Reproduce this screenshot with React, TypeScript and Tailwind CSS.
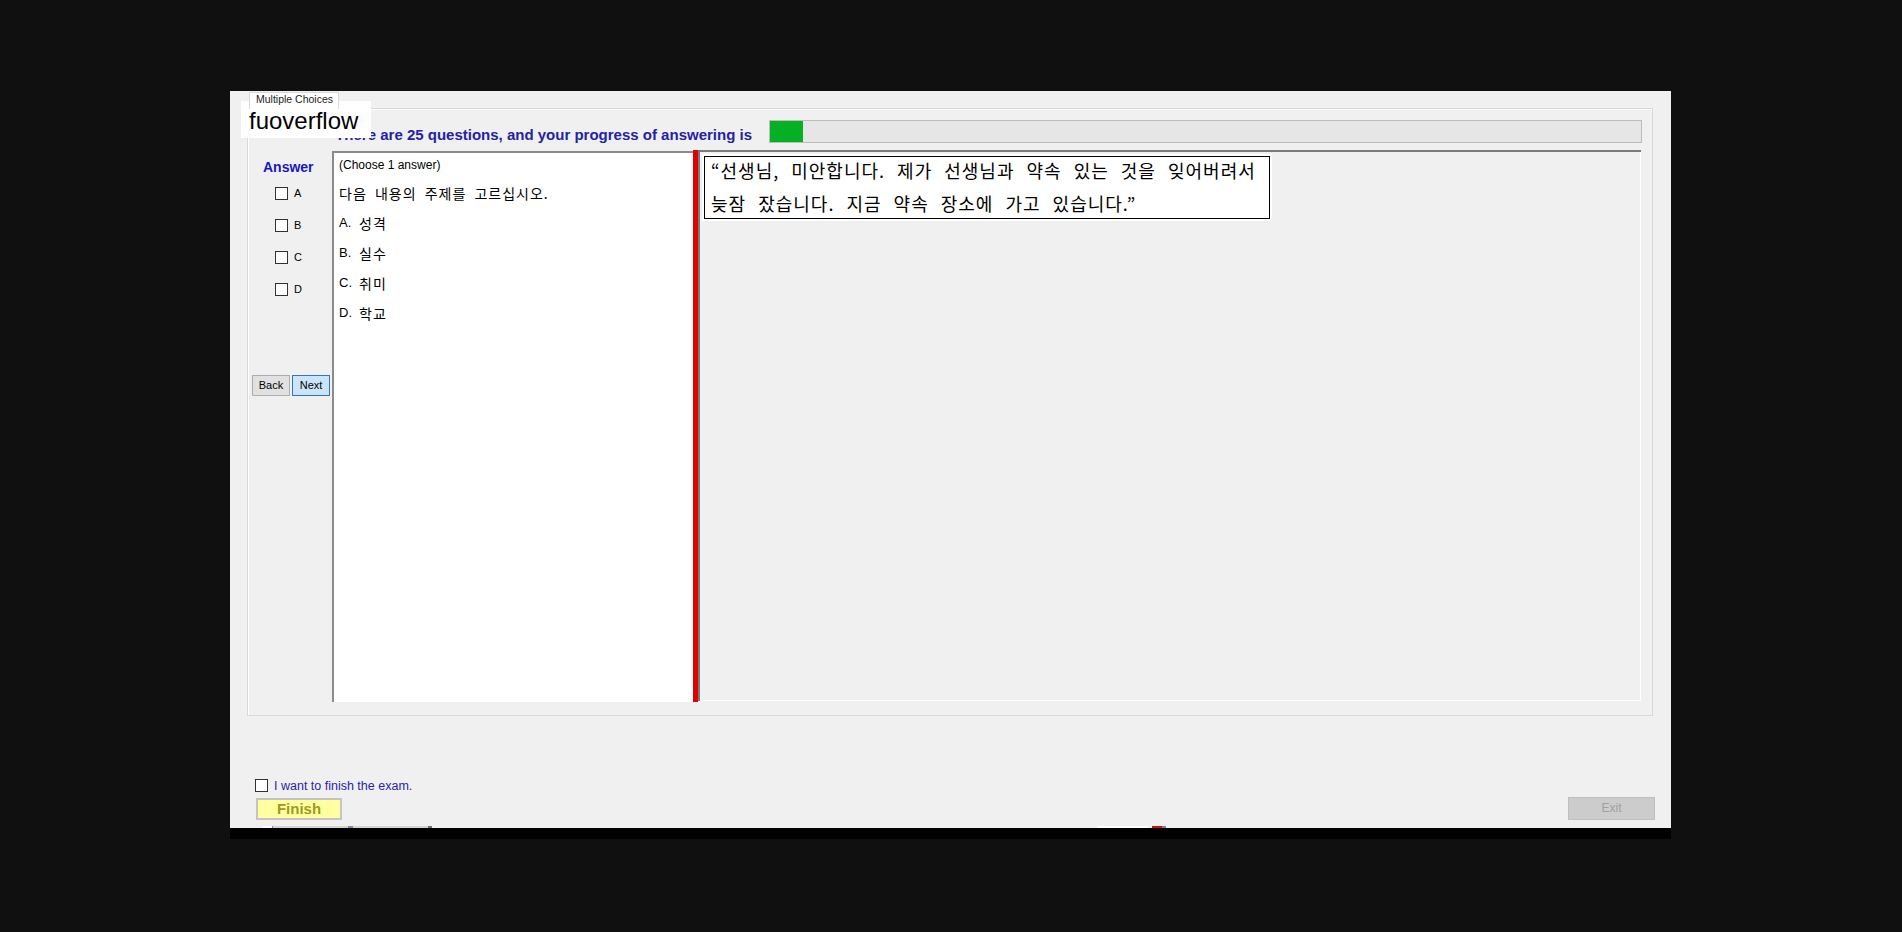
import React from "react";

const sans = { fontFamily: '"Liberation Sans", Arial, sans-serif' };
const kr = { fontFamily: '"Noto Sans CJK KR", "Liberation Sans", sans-serif' };

function Box() {
  return <span className="inline-block w-[13px] h-[13px] border border-[#333333] bg-white" />;
}

export default function App() {
  return (
    <div className="w-[1902px] h-[932px] bg-[#101010] pt-[91px] pl-[230px] overflow-hidden" style={sans}>
      <div className="w-[1441px] h-[748px] flex flex-col">
        <div className="relative h-[737px] bg-[#f0f0f0] overflow-hidden flex flex-col">
          {/* tab header */}
          <div className="h-[17px] pl-[19px] pt-[1px] flex">
            <div className="relative z-10 w-[90px] h-[17px] bg-white border-l border-t border-r border-[#d9d9d9] text-[10.5px] leading-[12px] text-[#222] pl-[6px]">
              Multiple Choices
            </div>
          </div>
          {/* tab page */}
          <div className="ml-[17px] w-[1406px] h-[608px] border border-[#d9d9d9] shadow-[inset_1px_1px_0_#ffffff] flex flex-col">
            <div className="h-[41px] flex pt-[11px]">
              <div className="w-[504px] text-right text-[15px] font-bold text-[#2323a3] leading-[17px] pt-[6px]">
                There are 25 questions, and your progress of answering is
              </div>
              <div className="ml-[17px] w-[873px] h-[23px] border border-[#bcbcbc] bg-[#e6e6e6]">
                <div className="w-[33px] h-full bg-[#06b025]" />
              </div>
            </div>
            <div className="h-[552px] flex">
              {/* left column */}
              <div className="w-[84px] flex flex-col">
                <div className="pl-[15px] pt-[9px] text-[14px] font-bold text-[#1717c4] leading-[16px]">Answer</div>
                <div className="mt-[12px] flex flex-col">
                  {["A", "B", "C", "D"].map((l) => (
                    <div key={l} className="h-[32px] pl-[27px] flex items-start">
                      <Box />
                      <span className="ml-[6px] text-[11px] leading-[13px] text-black">{l}</span>
                    </div>
                  ))}
                </div>
                <div className="mt-[60px] pl-[4px] flex gap-[2px]">
                  <div className="w-[38px] h-[21px] bg-[#e1e1e1] border border-[#adadad] text-[11px] leading-[19px] text-center text-black">Back</div>
                  <div className="w-[38px] h-[21px] bg-[#cce4f7] border border-[#2a78c0] text-[11px] leading-[19px] text-center text-black">Next</div>
                </div>
              </div>
              {/* question box */}
              <div className="mt-[1px] w-[361px] h-[551px] bg-white border-t-2 border-l-2 border-[#8c8c8c] pl-[5px] text-black">
                <div className="pt-[2px] text-[12px] leading-[20px]">(Choose 1 answer)</div>
                <div className="mt-[3px] text-[14px] leading-[30px] tracking-[1px] [word-spacing:4px]" style={kr}>다음 내용의 주제를 고르십시오.</div>
                {[
                  ["A.", "성격"],
                  ["B.", "실수"],
                  ["C.", "취미"],
                  ["D.", "학교"],
                ].map(([a, b]) => (
                  <div key={a} className="text-[14px] leading-[30px] flex">
                    <span className="w-[20px] text-[13px]" style={sans}>{a}</span>
                    <span className="tracking-[1px]" style={kr}>{b}</span>
                  </div>
                ))}
              </div>
              {/* red splitter */}
              <div className="w-[5px] h-[552px] bg-[#e00000]" />
              {/* right panel */}
              <div className="w-[943px] h-[551px] border-t-2 border-l-2 border-[#7a7a7a] shadow-[inset_-1px_-1px_0_#ffffff]">
                <div className="mt-[2px] ml-[2px] inline-block border-2 border-white">
                  <div className="w-[566px] h-[63px] border border-black bg-white pl-[6px] text-[18px] text-black tracking-[1px] [word-spacing:7px] overflow-hidden" style={kr}>
                    <div className="leading-[27px] whitespace-nowrap">“선생님, 미안합니다. 제가 선생님과 약속 있는 것을 잊어버려서</div>
                    <div className="leading-[39px] whitespace-nowrap">늦잠 잤습니다. 지금 약속 장소에 가고 있습니다.”</div>
                  </div>
                </div>
              </div>
            </div>
          </div>
          {/* bottom area */}
          <div className="mt-[63px] h-[13px] pl-[25px] flex items-center">
            <Box />
            <span className="ml-[6px] text-[12.5px] leading-[14px] text-[#2a1fae]">I want to finish the exam.</span>
          </div>
          <div className="mt-[5px] h-[23px] flex justify-between pl-[26px] pr-[16px]">
            <div className="mt-[1px] w-[86px] h-[22px] bg-[#ffffa0] border-2 border-[#c4c4c4] text-[15px] font-bold text-[#9e9a1e] leading-[18px] text-center">Finish</div>
            <div className="w-[87px] h-[23px] bg-[#cccccc] border border-[#bfbfbf] text-[12px] leading-[21px] text-center text-[#a0a0a0]">Exit</div>
          </div>
          <div className="mt-[6px] h-[2px] flex">
            <div className="ml-[33px] w-[9px] bg-white" />
            <div className="w-[1px] bg-[#8a8a8a]" />
            <div className="w-[75px] bg-[#d4d4d4]" />
            <div className="w-[5px] bg-[#8a8a8a]" />
            <div className="w-[75px] bg-[#d4d4d4]" />
            <div className="w-[4px] bg-[#707070]" />
            <div className="ml-[665px] w-[51px] bg-white" />
            <div className="ml-[4px] w-[10px] bg-[#d01010]" />
            <div className="w-[4px] bg-[#808080]" />
          </div>
          {/* watermark overlay */}
          <div className="absolute left-[11px] top-[10px] w-[130px] h-[37px] bg-white pl-[8px] text-[24px] leading-[40px] text-black">
            fuoverflow
          </div>
        </div>
        <div className="h-[11px] bg-black" />
      </div>
    </div>
  );
}
